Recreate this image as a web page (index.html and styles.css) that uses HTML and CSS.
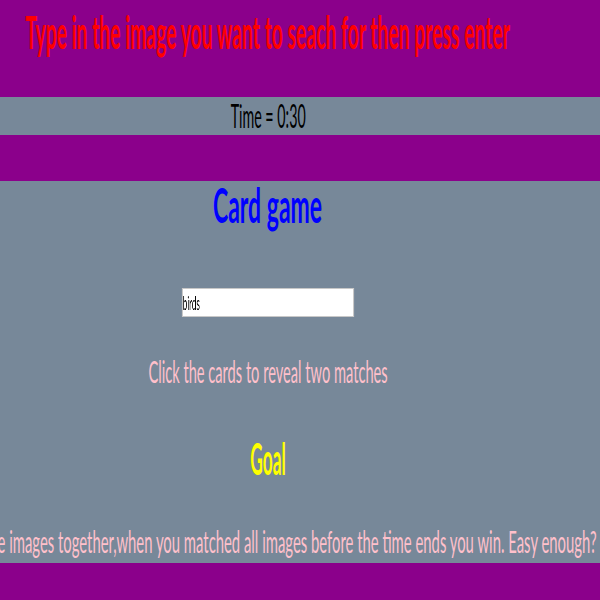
FILE: index.html
```html
<!DOCTYPE html>
<html lang="en">
<head>
<meta charset="utf-8">
<title>Card game</title>
<link rel="stylesheet" href="styles.css">
</head>
<body>
<header class="band band-top">
  <div class="col">
    <h2 class="line prompt"><span class="squeeze sq-prompt">Type in the image you want to seach for then press enter</span></h2>
  </div>
</header>
<div class="band band-time">
  <div class="col">
    <div class="line timer"><span class="squeeze sq-timer">Time = 0:30</span></div>
  </div>
</div>
<div class="band band-spacer"></div>
<main class="band band-main">
  <div class="col">
    <h1 class="line title"><span class="squeeze sq-title">Card game</span></h1>
    <div class="line field"><input class="search" type="text" value="birds"></div>
    <p class="line hint"><span class="squeeze sq-hint">Click the cards to reveal two matches</span></p>
    <h3 class="line goal"><span class="squeeze sq-goal">Goal</span></h3>
    <p class="line rules"><span class="squeeze sq-rules">Match the images together,when you matched all images before the time ends you win. Easy enough?</span></p>
  </div>
</main>
<footer class="band band-bottom"></footer>
</body>
</html>
```
FILE: styles.css
```css
html, body {
  margin: 0;
  padding: 0;
  overflow: hidden;
  background: #778899;
}
body {
  font-family: Lato, "Liberation Sans", sans-serif;
  font-weight: 400;
}
h1, h2, h3, p {
  margin: 0;
}
.band {
  width: 100%;
  overflow: hidden;
}
.col {
  width: 536px;
}
.line {
  display: flex;
  justify-content: center;
  white-space: nowrap;
}
.squeeze {
  display: inline-block;
  flex: none;
  transform-origin: center;
}

.band-top {
  background: #8b008b;
  height: 97px;
  padding-top: 4px;
  box-sizing: border-box;
}
.prompt {
  color: #ff0000;
  font-size: 46px;
  font-weight: 700;
  line-height: 56px;
}
.sq-prompt { transform: scaleX(0.42); }

.band-time {
  height: 38px;
}
.timer {
  color: #000;
  font-size: 32px;
  line-height: 38px;
}
.sq-timer { transform: scaleX(0.446); }

.band-spacer {
  background: #8b008b;
  height: 46px;
}

.band-main {
  height: 382px;
  box-sizing: border-box;
}
.title {
  color: #0000ff;
  font-size: 47px;
  font-weight: 700;
  line-height: 48px;
}
.sq-title { transform: scaleX(0.489); }

.field {
  margin-top: 59px;
}
.search {
  flex: none;
  width: 410px;
  height: 29px;
  box-sizing: border-box;
  margin: 0;
  padding: 0;
  border-style: solid;
  border-color: #c8c8c8;
  border-width: 1px 2px;
  background: #fff;
  color: #000;
  font-family: Lato, "Liberation Sans", sans-serif;
  font-weight: 400;
  font-size: 19px;
  transform: scaleX(0.42);
  transform-origin: center;
  will-change: transform;
  outline: none;
}

.hint {
  color: #ffc0cb;
  font-size: 30px;
  line-height: 36px;
  margin-top: 36px;
}
.sq-hint { transform: scaleX(0.488); }

.goal {
  color: #ffff00;
  font-size: 44px;
  font-weight: 700;
  line-height: 50px;
  margin-top: 44px;
}
.sq-goal { transform: scaleX(0.394); }

.rules {
  color: #ffc0cb;
  font-size: 30px;
  line-height: 36px;
  margin-top: 40px;
}
.sq-rules { transform: scaleX(0.495); }

.band-bottom {
  background: #8b008b;
  height: 37px;
}
```
